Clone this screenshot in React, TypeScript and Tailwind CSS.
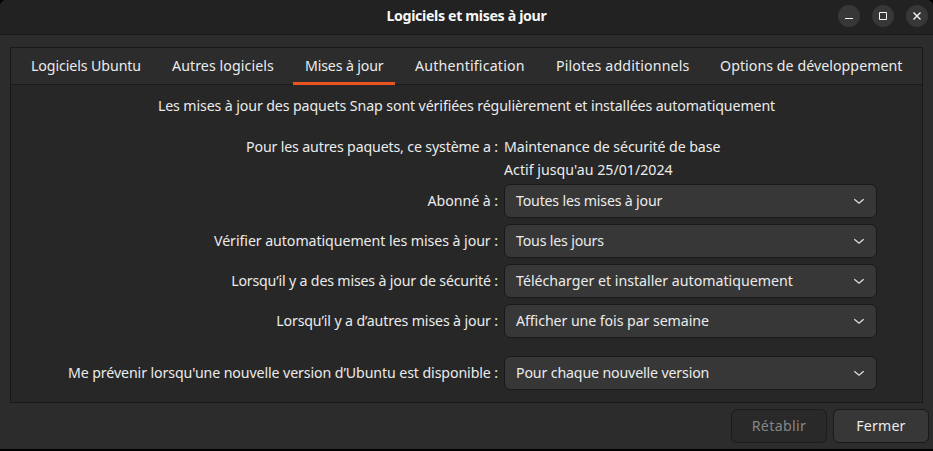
import type { ReactNode } from "react";

const tabs = [
  { label: "Logiciels Ubuntu", cls: "w-[141px] tracking-[-0.095px]" },
  { label: "Autres logiciels", cls: "w-[133px] tracking-[0.08px]" },
  { label: "Mises à jour", cls: "w-[110px] tracking-[-0.154px]", active: true },
  { label: "Authentification", cls: "w-[141px] tracking-[0.19px]" },
  { label: "Pilotes additionnels", cls: "w-[164px] tracking-[0.15px]" },
  { label: "Options de développement", cls: "w-[190px] tracking-[0.05px]" },
];

const settings = [
  { label: "Abonné à :", labelCls: "tracking-[-0.056px]", value: "Toutes les mises à jour", valueCls: "tracking-[-0.2px]" },
  { label: "Vérifier automatiquement les mises à jour :", labelCls: "tracking-[-0.07px]", value: "Tous les jours", valueCls: "tracking-[-0.19px]" },
  { label: "Lorsqu’il y a des mises à jour de sécurité :", labelCls: "tracking-[-0.18px]", value: "Télécharger et installer automatiquement", valueCls: "tracking-[-0.01px]" },
  { label: "Lorsqu’il y a d’autres mises à jour :", labelCls: "tracking-[-0.14px]", value: "Afficher une fois par semaine", valueCls: "tracking-[-0.08px]" },
  { label: "Me prévenir lorsqu'une nouvelle version d’Ubuntu est disponible :", labelCls: "tracking-[-0.106px]", value: "Pour chaque nouvelle version", valueCls: "tracking-[-0.15px]", spaced: true },
];

function WindowButton({ label, children }: { label: string; children: ReactNode }) {
  return (
    <button aria-label={label} className="flex size-[22px] items-center justify-center rounded-full bg-[#373737]">
      <svg width="22" height="22" viewBox="0 0 22 22" fill="none" stroke="#f7f7f7">
        {children}
      </svg>
    </button>
  );
}

function Select({ value, cls }: { value: string; cls: string }) {
  return (
    <button className="flex h-[34px] w-[373px] items-center justify-between rounded-md border border-[#191919] bg-[#373737] px-[11px]">
      <span className={cls}>{value}</span>
      <svg width="12" height="8" viewBox="0 0 12 8" fill="none" stroke="#dedede" strokeWidth="1.3">
        <path d="M1.3 2.2 L6 6.2 L10.7 2.2" />
      </svg>
    </button>
  );
}

export default function App() {
  return (
    <div className="h-[451px] w-[933px] bg-black font-['Noto_Sans','Open_Sans',sans-serif] text-[14.2px] leading-5 whitespace-nowrap text-[#ebebeb]">
      <div className="flex h-[449px] flex-col overflow-hidden rounded-t-[6px] bg-[#2c2c2c]">
        <header className="grid h-[35px] shrink-0 grid-cols-[1fr_auto_1fr] border-b border-[#191919] bg-[#222222]">
          <h1 className="col-start-2 pt-[6px] font-bold tracking-[-0.35px] text-[#f7f7f7]">Logiciels et mises à jour</h1>
          <div className="flex justify-end gap-3 pt-[5px] pr-[5px]">
            <WindowButton label="Réduire"><path d="M7 13.5h8" /></WindowButton>
            <WindowButton label="Agrandir"><path d="M7.5 7.5h7v7h-7z" /></WindowButton>
            <WindowButton label="Fermer"><path d="M7.5 7.5l7 7M14.5 7.5l-7 7" strokeWidth="1.4" /></WindowButton>
          </div>
        </header>

        <main className="mt-3 ml-[10px] h-[356px] w-[913px] shrink-0 border border-[#191919] bg-[#272727]">
          <nav className="flex h-[37px] border-b border-[#191919] bg-[#2c2c2c] pl-[8px]">
            {tabs.map((tab) => (
              <div key={tab.label} className={tab.cls}>
                <button
                  className={
                    tab.active
                      ? "h-[37px] w-[102px] border-b-[3px] border-[#e95420] pt-[2px] pl-[12px] text-left"
                      : "h-[36px] pl-[12px] text-left"
                  }
                >
                  {tab.label}
                </button>
              </div>
            ))}
          </nav>

          <p className="mt-[11px] text-center tracking-[-0.115px]">
            Les mises à jour des paquets Snap sont vérifiées régulièrement et installées automatiquement
          </p>

          <div className="mt-[21px] grid grid-cols-[487px_373px] gap-x-[6px]">
            <span className="text-right tracking-[-0.155px]">Pour les autres paquets, ce système a :</span>
            <div className="h-[47px] leading-[23px]">
              <div className="-mt-[2px] tracking-[-0.1px]">Maintenance de sécurité de base</div>
              <div className="tracking-[0.01px]">Actif jusqu'au 25/01/2024</div>
            </div>
          </div>

          <div className="flex flex-col gap-[6px]">
            {settings.map((s) => (
              <div
                key={s.label}
                className={s.spaced ? "mt-3 grid grid-cols-[487px_373px] items-center gap-x-[6px]" : "grid grid-cols-[487px_373px] items-center gap-x-[6px]"}
              >
                <span className={`text-right ${s.labelCls}`}>{s.label}</span>
                <Select value={s.value} cls={s.valueCls} />
              </div>
            ))}
          </div>
        </main>

        <footer className="mt-[6px] flex justify-end gap-[6px] pr-[4px]">
          <button className="h-[34px] w-[96px] rounded-md border border-[#1c1c1c] bg-[#292929] tracking-[0.35px] text-[#868686]">Rétablir</button>
          <button className="h-[34px] w-[96px] rounded-md border border-[#191919] bg-[#373737] tracking-[0.15px]">Fermer</button>
        </footer>
      </div>
    </div>
  );
}
